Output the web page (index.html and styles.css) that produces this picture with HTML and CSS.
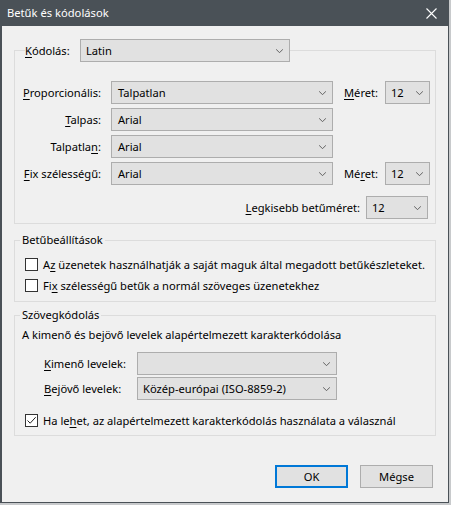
FILE: index.html
```html
<!DOCTYPE html>
<html lang="hu">
<head>
<meta charset="utf-8">
<title>Betűk és kódolások</title>
<link rel="stylesheet" href="styles.css">
</head>
<body>
<div class="window">
  <div class="titlebar">
    <span class="title">Betűk és kódolások</span>
    <svg class="close" width="11" height="11" viewBox="0 0 11 11"><path d="M0.5 0.5 L10.5 10.5 M10.5 0.5 L0.5 10.5" stroke="#ffffff" stroke-width="1.1" fill="none"/></svg>
  </div>
  <div class="content">
    <fieldset class="group fonts">
      <legend class="enc-legend">
        <span class="enc-lbl"><u>K</u>ódolás:</span>
        <div class="combo w-enc"><span class="val">Latin</span><svg class="chev" width="7" height="4" viewBox="0 0 7 4"><path d="M0 0.2 L3.5 3.7 L7 0.2" stroke="#606060" stroke-width="1" fill="none"/></svg></div>
      </legend>
      <div class="row">
        <span class="lbl-col"><u>P</u>roporcionális:</span>
        <div class="combo w-main"><span class="val">Talpatlan</span><svg class="chev" width="7" height="4" viewBox="0 0 7 4"><path d="M0 0.2 L3.5 3.7 L7 0.2" stroke="#606060" stroke-width="1" fill="none"/></svg></div>
        <span class="size-lbl"><u>M</u>éret:</span>
        <div class="combo w-size"><span class="val">12</span><svg class="chev" width="7" height="4" viewBox="0 0 7 4"><path d="M0 0.2 L3.5 3.7 L7 0.2" stroke="#606060" stroke-width="1" fill="none"/></svg></div>
      </div>
      <div class="row">
        <span class="lbl-col"><u>T</u>alpas:</span>
        <div class="combo w-main"><span class="val">Arial</span><svg class="chev" width="7" height="4" viewBox="0 0 7 4"><path d="M0 0.2 L3.5 3.7 L7 0.2" stroke="#606060" stroke-width="1" fill="none"/></svg></div>
      </div>
      <div class="row">
        <span class="lbl-col">Talpatla<u>n</u>:</span>
        <div class="combo w-main"><span class="val">Arial</span><svg class="chev" width="7" height="4" viewBox="0 0 7 4"><path d="M0 0.2 L3.5 3.7 L7 0.2" stroke="#606060" stroke-width="1" fill="none"/></svg></div>
      </div>
      <div class="row">
        <span class="lbl-col"><u>F</u>ix szélességű:</span>
        <div class="combo w-main"><span class="val">Arial</span><svg class="chev" width="7" height="4" viewBox="0 0 7 4"><path d="M0 0.2 L3.5 3.7 L7 0.2" stroke="#606060" stroke-width="1" fill="none"/></svg></div>
        <span class="size-lbl">Mé<u>r</u>et:</span>
        <div class="combo w-size"><span class="val">12</span><svg class="chev" width="7" height="4" viewBox="0 0 7 4"><path d="M0 0.2 L3.5 3.7 L7 0.2" stroke="#606060" stroke-width="1" fill="none"/></svg></div>
      </div>
      <div class="row min-row">
        <span class="min-lbl"><u>L</u>egkisebb betűméret:</span>
        <div class="combo w-min"><span class="val">12</span><svg class="chev" width="7" height="4" viewBox="0 0 7 4"><path d="M0 0.2 L3.5 3.7 L7 0.2" stroke="#606060" stroke-width="1" fill="none"/></svg></div>
      </div>
    </fieldset>

    <fieldset class="group opts">
      <legend class="glegend">Betűbeállítások</legend>
      <div class="check-row"><span class="box"></span><span>A<u>z</u> üzenetek használhatják a saját maguk által megadott betűkészleteket.</span></div>
      <div class="check-row"><span class="box"></span><span>Fi<u>x</u> szélességű betűk a normál szöveges üzenetekhez</span></div>
    </fieldset>

    <fieldset class="group textenc">
      <legend class="glegend">Szövegkódolás</legend>
      <div class="desc">A kimenő és bejövő levelek alapértelmezett karakterkódolása</div>
      <div class="enc-row first">
        <span class="enc-col"><u>K</u>imenő levelek:</span>
        <div class="combo w-enc2"><span class="val"></span><svg class="chev" width="7" height="4" viewBox="0 0 7 4"><path d="M0 0.2 L3.5 3.7 L7 0.2" stroke="#606060" stroke-width="1" fill="none"/></svg></div>
      </div>
      <div class="enc-row">
        <span class="enc-col"><u>B</u>ejövő levelek:</span>
        <div class="combo w-enc2"><span class="val">Közép-európai (ISO-8859-2)</span><svg class="chev" width="7" height="4" viewBox="0 0 7 4"><path d="M0 0.2 L3.5 3.7 L7 0.2" stroke="#606060" stroke-width="1" fill="none"/></svg></div>
      </div>
      <div class="check-row last"><span class="box checked"><svg width="11" height="11" viewBox="0 0 11 11"><path d="M1.5 5.5 L4.2 8.2 L9.7 2.2" stroke="#222" stroke-width="1" fill="none"/></svg></span><span>Ha le<u>h</u>et, az alapértelmezett karakterkódolás használata a válasznál</span></div>
    </fieldset>

    <div class="buttons">
      <button class="btn default">OK</button>
      <button class="btn">Mégse</button>
    </div>
  </div>
</div>
</body>
</html>
```

FILE: styles.css
```css
html, body {
  margin: 0;
  padding: 0;
}
body {
  background: #c8cacc;
  width: 451px;
  height: 505px;
  overflow: hidden;
  font-family: "Noto Sans", "Liberation Sans", Arial, sans-serif;
  font-size: 11.15px;
  line-height: 16px;
  color: #000;
}
u {
  text-decoration: underline;
  text-underline-offset: 2px;
}
.window {
  box-sizing: border-box;
  width: 449px;
  height: 503px;
  background: #f0f0f0;
  border: 1px solid #4a5157;
  border-top: none;
  border-left-width: 2px;
}
.titlebar {
  height: 26px;
  background: #4a5157;
  display: flex;
  align-items: center;
  justify-content: space-between;
  margin: 0 -1px 0 -2px;
  padding: 0 10px 0 7px;
}
.title {
  color: #fff;
  font-size: 11.2px;
}
.close {
  display: block;
  margin-right: 2px;
}
.content {
  display: flex;
  flex-direction: column;
  padding: 0 0 0 12px;
}
.group {
  margin: 0;
  width: 422px;
  box-sizing: border-box;
  border: 1px solid #dcdcdc;
  min-width: 0;
}
.fonts {
  margin-top: 13px;
  padding: 19px 4px 4px 6px;
}
.enc-legend {
  padding: 0;
  margin-left: 4px;
  display: flex;
  align-items: center;
}
.enc-lbl {
  width: 55px;
}
.combo {
  box-sizing: border-box;
  height: 23px;
  border: 1px solid #adadad;
  background: #e1e1e1;
  display: flex;
  align-items: center;
  padding-left: 5px;
}
.combo .val {
  flex: 1;
  white-space: nowrap;
}
.combo .chev {
  display: block;
  margin-right: 6px;
}
.w-enc { width: 210px; }
.w-main { width: 222px; padding-left: 6px; }
.w-size { width: 45px; }
.w-min { width: 62px; }
.w-enc2 { width: 200px; }
.row {
  display: flex;
  align-items: center;
  height: 23px;
}
.row + .row {
  margin-top: 4px;
}
.lbl-col {
  width: 80px;
  text-align: right;
  margin-right: 10px;
  white-space: nowrap;
}
.size-lbl {
  width: 41px;
  margin-left: 11px;
}
.row.min-row {
  margin-top: 11px;
  justify-content: flex-end;
  padding-right: 3px;
}
.min-lbl {
  margin-right: 6px;
}
.glegend {
  padding: 0 2px;
  margin-left: -5px;
  line-height: 16px;
}
.opts {
  margin-top: 8px;
  padding: 6px 4px 5px 10px;
}
.textenc {
  margin-top: 5px;
  padding: 4px 4px 4px 10px;
}
.check-row {
  display: flex;
  align-items: center;
  height: 21px;
  white-space: nowrap;
}
.box {
  box-sizing: border-box;
  width: 13px;
  height: 13px;
  border: 1px solid #333;
  background: #fff;
  margin-right: 5px;
  flex: none;
  display: flex;
  align-items: center;
  justify-content: center;
}
.box svg { display: block; }
.desc {
  line-height: 16px;
  margin-left: -3px;
}
.enc-row {
  display: flex;
  align-items: center;
  height: 23px;
  margin-top: 2px;
}
.enc-row.first {
  margin-top: 9px;
}
.enc-col {
  width: 93px;
  margin-left: 19px;
  white-space: nowrap;
}
.check-row.last {
  margin-top: 10px;
}
.buttons {
  display: flex;
  justify-content: flex-end;
  gap: 12px;
  width: 422px;
  margin-top: 29px;
  box-sizing: border-box;
  padding-right: 3px;
}
.btn {
  box-sizing: border-box;
  width: 73px;
  height: 23px;
  border: 1px solid #adadad;
  background: #e1e1e1;
  font-family: inherit;
  font-size: 11.15px;
  color: #000;
  padding: 0;
}
.btn.default {
  border: 2px solid #0078d7;
}
```
